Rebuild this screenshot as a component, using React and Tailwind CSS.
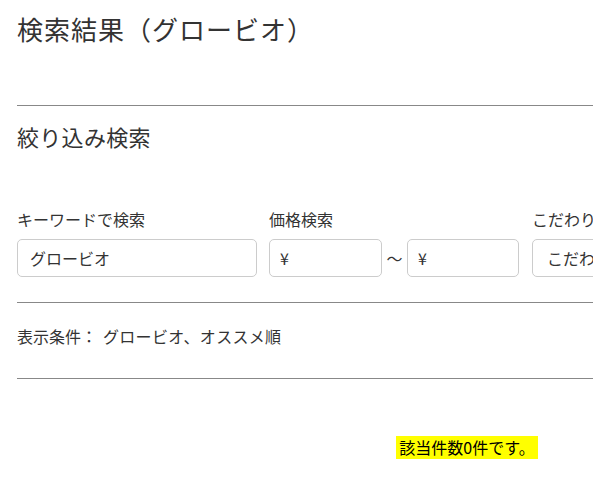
export default function App() {
  const font = { fontFamily: '"Noto Sans CJK JP", "Noto Sans", sans-serif' };
  return (
    <div className="w-full overflow-hidden bg-white text-[#333]" style={font}>
      <div className="w-[900px] ml-[17px]">
        <h1 className="text-[26px] leading-[36px] mt-[11px] tracking-[1px] text-[#333]">検索結果（グロービオ）</h1>
        <div className="h-px bg-[#888] mt-[58px]" />
        <h2 className="text-[22px] leading-[30px] mt-[15px] tracking-[0.3px]">絞り込み検索</h2>
        <div className="flex mt-[56px] gap-[12px]">
          <div className="w-[240px] flex flex-col">
            <label className="text-[16px] leading-[24px]">キーワードで検索</label>
            <div className="mt-[8px] h-[38px] border border-[#ccc] rounded-[5px] flex items-center px-[12px] text-[16px]">グロービオ</div>
          </div>
          <div className="w-[251px] flex flex-col">
            <label className="text-[16px] leading-[24px]">価格検索</label>
            <div className="mt-[8px] flex items-center">
              <div className="w-[113px] h-[38px] border border-[#ccc] rounded-[5px] flex items-center px-[10px] text-[16px]">¥</div>
              <span className="w-[25px] text-center text-[16px]">〜</span>
              <div className="w-[112px] h-[38px] border border-[#ccc] rounded-[5px] flex items-center px-[10px] text-[16px]">¥</div>
            </div>
          </div>
          <div className="w-[240px] flex flex-col">
            <label className="text-[16px] leading-[24px]">こだわり条件</label>
            <div className="mt-[8px] h-[38px] border border-[#ccc] rounded-[5px] flex items-center px-[14px] text-[16px]">こだわり条件を選択</div>
          </div>
        </div>
        <div className="h-px bg-[#888] mt-[25px]" />
        <p className="text-[16px] leading-[24px] mt-[21px]">
          <span>表示条件：</span>
          <span className="ml-[6px] tracking-[0.3px]">グロービオ、オススメ順</span>
        </p>
        <div className="h-px bg-[#888] mt-[30px]" />
        <div className="flex justify-center mt-[57px]">
          <span className="bg-[#ffff00] text-black text-[16px] leading-[23px] px-[3px]">該当件数0件です。</span>
        </div>
      </div>
    </div>
  );
}
